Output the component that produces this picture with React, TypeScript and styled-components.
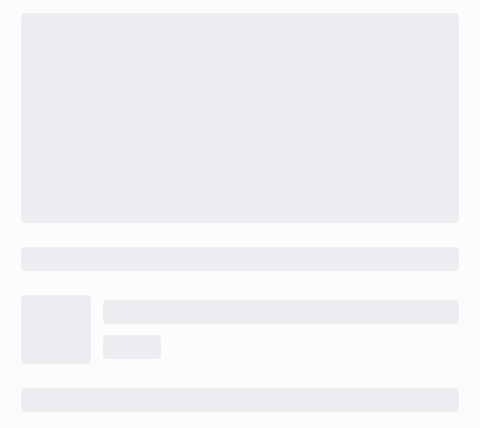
import React from "react";
import styled, { createGlobalStyle } from "styled-components";

const Global = createGlobalStyle`
  html, body { margin: 0; padding: 0; background: #fdfcfd; }
  body { font-family: "Liberation Sans", Arial, sans-serif; }
`;

const Page = styled.div`
  width: 480px;
  height: 428px;
  box-sizing: border-box;
  padding: 13px 21px 16px;
  display: flex;
  flex-direction: column;
  gap: 24px;
  background: #fdfcfd;
`;

const Bone = styled.div<{ $h: number; $w?: number }>`
  height: ${(p) => p.$h}px;
  width: ${(p) => (p.$w ? `${p.$w}px` : "100%")};
  flex-shrink: 0;
  background: #efedf2;
  border-radius: 4px;
`;

const Row = styled.div`
  display: flex;
  align-items: center;
  gap: 12px;
`;

const Lines = styled.div`
  flex: 1;
  display: flex;
  flex-direction: column;
  gap: 11px;
`;

export default function App() {
  return (
    <>
      <Global />
      <Page>
        <Bone $h={210} />
        <Bone $h={24} />
        <Row>
          <Bone $h={69} $w={70} />
          <Lines>
            <Bone $h={24} />
            <Bone $h={24} $w={58} />
          </Lines>
        </Row>
        <Bone $h={24} />
      </Page>
    </>
  );
}
